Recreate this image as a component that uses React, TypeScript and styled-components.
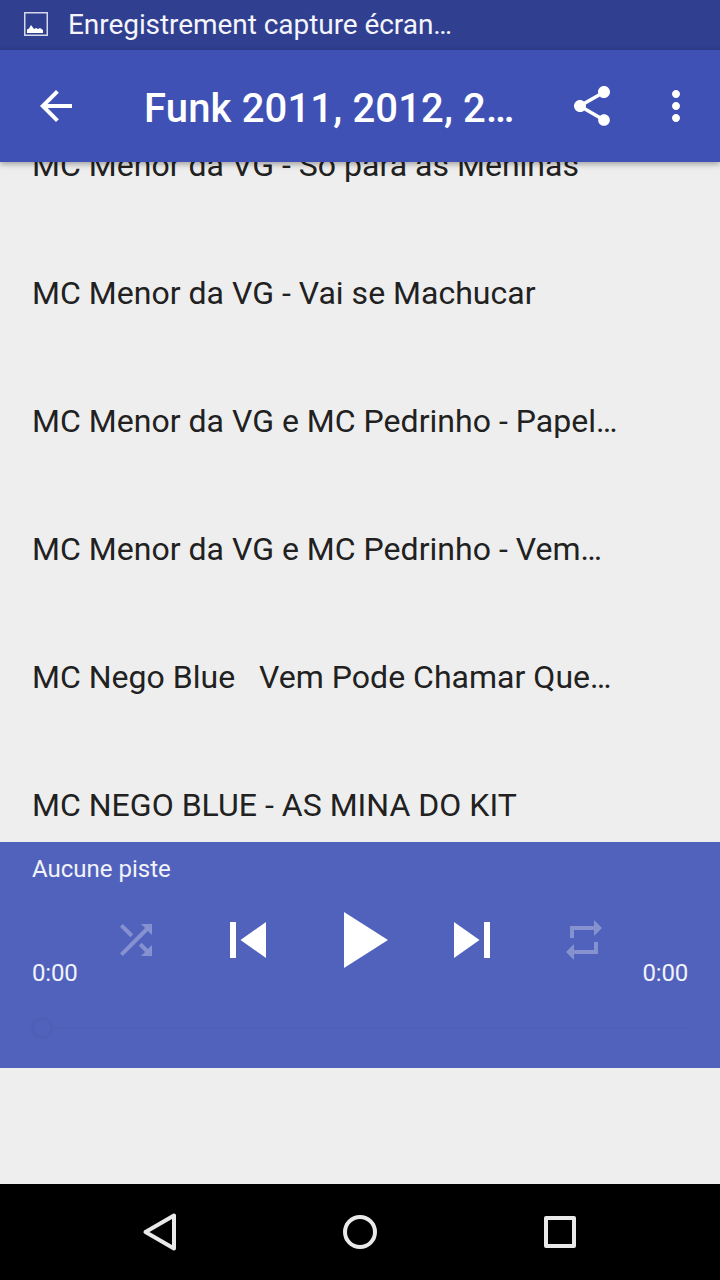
import React from 'react';
import styled, { createGlobalStyle } from 'styled-components';
import {
  MdArrowBack,
  MdShare,
  MdMoreVert,
  MdShuffle,
  MdSkipPrevious,
  MdSkipNext,
  MdPlayArrow,
  MdRepeat,
} from 'react-icons/md';

const tracks = [
  'MC Menor da VG - Só para as Meninas',
  'MC Menor da VG - Vai se Machucar',
  'MC Menor da VG e MC Pedrinho - Papel…',
  'MC Menor da VG e MC Pedrinho - Vem…',
  'MC Nego Blue   Vem Pode Chamar Que…',
  'MC NEGO BLUE - AS MINA DO KIT',
];

function App() {
  return (
    <Screen>
      <GlobalStyle />
      <StatusBar>
        <NotificationIcon viewBox="0 0 24 24">
          <path
            fill="#fff"
            fillRule="evenodd"
            d="M0 0h24v24H0zM1.5 1.5v21h21V1.5z"
            opacity="0.8"
          />
          <path fill="#fff" d="M3 21v-3.5l2-1 2-3.5 3 4 2-1 2 1 2-1 3 2V21z" />
        </NotificationIcon>
        <StatusText>Enregistrement capture écran…</StatusText>
      </StatusBar>
      <Toolbar>
        <BackButton>
          <MdArrowBack size={48} />
        </BackButton>
        <Title>Funk 2011, 2012, 2…</Title>
        <ActionButton>
          <MdShare size={48} />
        </ActionButton>
        <MenuButton>
          <MdMoreVert size={48} />
        </MenuButton>
      </Toolbar>
      <TrackList>
        <ScrolledTracks>
          {tracks.map((name) => (
            <TrackRow key={name}>
              <TrackName>{name}</TrackName>
            </TrackRow>
          ))}
        </ScrolledTracks>
      </TrackList>
      <Player>
        <NowPlaying>Aucune piste</NowPlaying>
        <ControlsRow>
          <Time>0:00</Time>
          <Controls>
            <ControlSlot $dim>
              <MdShuffle size={48} />
            </ControlSlot>
            <ControlSlot>
              <MdSkipPrevious size={72} />
            </ControlSlot>
            <ControlSlot>
              <MdPlayArrow size={96} />
            </ControlSlot>
            <ControlSlot>
              <MdSkipNext size={72} />
            </ControlSlot>
            <ControlSlot $dim>
              <MdRepeat size={48} />
            </ControlSlot>
          </Controls>
          <Time>0:00</Time>
        </ControlsRow>
        <Slider>
          <Thumb />
          <Track />
        </Slider>
      </Player>
      <Spacer />
      <NavBar>
        <NavIcon viewBox="0 0 36 40" width="36" height="40">
          <path
            d="M32 3.5v33L3.5 20z"
            fill="none"
            stroke="#eaeaea"
            strokeWidth="4"
            strokeLinejoin="round"
          />
        </NavIcon>
        <HomeCircle />
        <RecentSquare />
      </NavBar>
    </Screen>
  );
}

const GlobalStyle = createGlobalStyle`
  html, body {
    margin: 0;
    padding: 0;
    background: #eeeeee;
  }
`;

const Screen = styled.div`
  display: flex;
  flex-direction: column;
  width: 720px;
  height: 1280px;
  overflow: hidden;
  background: #eeeeee;
  font-family: Roboto, "Liberation Sans", sans-serif;
`;

const StatusBar = styled.div`
  display: flex;
  align-items: center;
  height: 50px;
  flex-shrink: 0;
  padding-left: 24px;
  box-sizing: border-box;
  background: #303f8f;
  color: #fff;
`;

const NotificationIcon = styled.svg`
  width: 24px;
  height: 24px;
  margin-right: 20px;
  margin-bottom: 2px;
`;

const StatusText = styled.div`
  font-size: 28px;
  line-height: 50px;
  letter-spacing: -0.06px;
  color: #f4f5fa;
`;

const Toolbar = styled.div`
  position: relative;
  z-index: 2;
  display: flex;
  align-items: center;
  height: 112px;
  flex-shrink: 0;
  background: #3f51b5;
  color: #fff;
  box-shadow: 0 2px 6px rgba(0, 0, 0, 0.35);
`;

const BackButton = styled.div`
  display: flex;
  width: 48px;
  height: 48px;
  margin-left: 32px;
  margin-right: 64px;
`;

const Title = styled.div`
  width: 369px;
  margin-top: 4px;
  font-size: 40px;
  font-weight: 500;
  letter-spacing: 0.15px;
  white-space: nowrap;
`;

const ActionButton = styled.div`
  display: flex;
  width: 48px;
  height: 48px;
  margin-left: 55px;
`;

const MenuButton = styled.div`
  display: flex;
  width: 48px;
  height: 48px;
  margin-left: 36px;
`;

const TrackList = styled.div`
  height: 680px;
  flex-shrink: 0;
  overflow: hidden;
`;

const ScrolledTracks = styled.div`
  margin-top: -61px;
`;

const TrackRow = styled.div`
  display: flex;
  align-items: center;
  height: 128px;
  padding-left: 32px;
`;

const TrackName = styled.div`
  font-size: 32px;
  letter-spacing: 0.02px;
  color: #212121;
  white-space: pre;
`;

const Player = styled.div`
  display: flex;
  flex-direction: column;
  height: 226px;
  flex-shrink: 0;
  box-sizing: border-box;
  padding: 12px 32px 0;
  background: #5162bc;
  color: #fff;
`;

const NowPlaying = styled.div`
  font-size: 24px;
  line-height: 30px;
  color: #f2f3fa;
`;

const ControlsRow = styled.div`
  display: flex;
  align-items: flex-end;
  justify-content: space-between;
  height: 102px;
  margin-top: 4px;
`;

const Time = styled.div`
  font-size: 24px;
  line-height: 30px;
  margin-bottom: 2px;
  letter-spacing: -0.2px;
  color: #f2f3fa;
`;

const Controls = styled.div`
  display: flex;
  align-items: center;
  height: 96px;
  margin-top: 4px;
  align-self: flex-start;
`;

const ControlSlot = styled.div<{ $dim?: boolean }>`
  display: flex;
  align-items: center;
  justify-content: center;
  width: 112px;
  color: #fff;
  opacity: ${(p) => (p.$dim ? 0.3 : 1)};
`;

const Slider = styled.div`
  display: flex;
  align-items: center;
  height: 22px;
  margin-top: 27px;
  margin-left: -1px;
`;

const Thumb = styled.div`
  width: 22px;
  height: 22px;
  flex-shrink: 0;
  box-sizing: border-box;
  border: 3px solid rgba(0, 0, 0, 0.025);
  border-radius: 50%;
`;

const Track = styled.div`
  flex: 1;
  height: 2px;
  background: rgba(0, 0, 0, 0.015);
`;

const Spacer = styled.div`
  flex: 1;
`;

const NavBar = styled.div`
  display: flex;
  align-items: center;
  height: 96px;
  flex-shrink: 0;
  padding-left: 142px;
  box-sizing: border-box;
  background: #000;
`;

const NavIcon = styled.svg`
  flex-shrink: 0;
`;

const HomeCircle = styled.div`
  width: 34px;
  height: 34px;
  box-sizing: border-box;
  margin-left: 165px;
  border: 4px solid #eaeaea;
  border-radius: 50%;
`;

const RecentSquare = styled.div`
  width: 32px;
  height: 32px;
  box-sizing: border-box;
  margin-left: 167px;
  border: 4px solid #eaeaea;
  border-radius: 2px;
`;

export default App;
